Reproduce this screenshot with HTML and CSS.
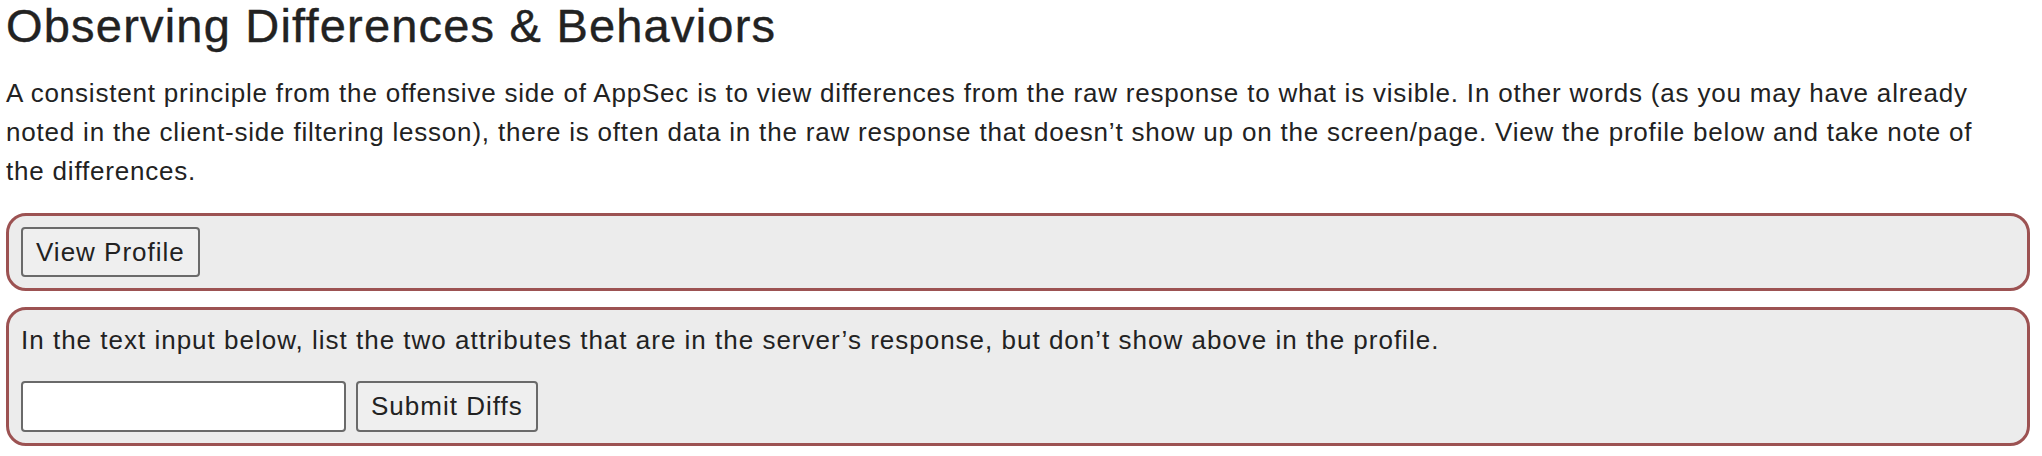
FILE: index.html
```html
<!DOCTYPE html>
<html lang="en">
<head>
<meta charset="utf-8">
<title>Observing Differences &amp; Behaviors</title>
<link rel="stylesheet" href="styles.css">
</head>
<body>
<main class="lesson">
  <h2 class="lesson-title">Observing Differences &amp; Behaviors</h2>
  <p class="lesson-text">A consistent principle from the offensive side of AppSec is to view differences from the raw response to what is visible. In other words (as you may have already noted in the client-side filtering lesson), there is often data in the raw response that doesn’t show up on the screen/page. View the profile below and take note of the differences.</p>
  <section class="attack-box">
    <button class="btn" type="button">View Profile</button>
  </section>
  <section class="attack-box">
    <p class="box-text">In the text input below, list the two attributes that are in the server’s response, but don’t show above in the profile.</p>
    <form class="diff-form">
      <input class="text-input" type="text" aria-label="Differences">
      <button class="btn" type="button">Submit Diffs</button>
    </form>
  </section>
</main>
</body>
</html>
```

FILE: styles.css
```css
html, body {
  margin: 0;
  padding: 0;
  background: #ffffff;
}

body {
  font-family: "Liberation Sans", Arial, Helvetica, sans-serif;
  color: #222222;
}

.lesson {
  padding: 0 12px 0 6px;
}

.lesson-title {
  margin: 0;
  font-size: 47px;
  line-height: 1.1;
  font-weight: 400;
  letter-spacing: 1.2px;
  color: #222222;
  -webkit-text-stroke: 0.4px #222222;
}

.lesson-text {
  margin: 22px 40px 22px 0;
  font-size: 26px;
  line-height: 39px;
  letter-spacing: 0.8px;
}

.attack-box {
  background: #ececec;
  border: 3px solid #9c5252;
  border-radius: 20px;
  padding: 11px 12px 11px 12px;
  margin-bottom: 16px;
  font-size: 26px;
}

.box-text {
  margin: 0 0 21px 0;
  font-size: 26px;
  line-height: 39px;
  letter-spacing: 1px;
}

.diff-form {
  display: flex;
  gap: 10px;
  align-items: stretch;
}

.btn {
  font-family: "Liberation Sans", Arial, Helvetica, sans-serif;
  font-size: 26px;
  line-height: 30px;
  letter-spacing: 1px;
  color: #222222;
  background: #efefef;
  border: 2px solid #6a6a6a;
  border-radius: 4px;
  padding: 8px 13px;
  margin: 0;
}

.text-input {
  width: 325px;
  box-sizing: border-box;
  height: 51px;
  font-family: "Liberation Sans", Arial, Helvetica, sans-serif;
  font-size: 26px;
  background: #ffffff;
  border: 2px solid #6a6a6a;
  border-radius: 4px;
  padding: 4px 8px;
  margin: 0;
}
```
